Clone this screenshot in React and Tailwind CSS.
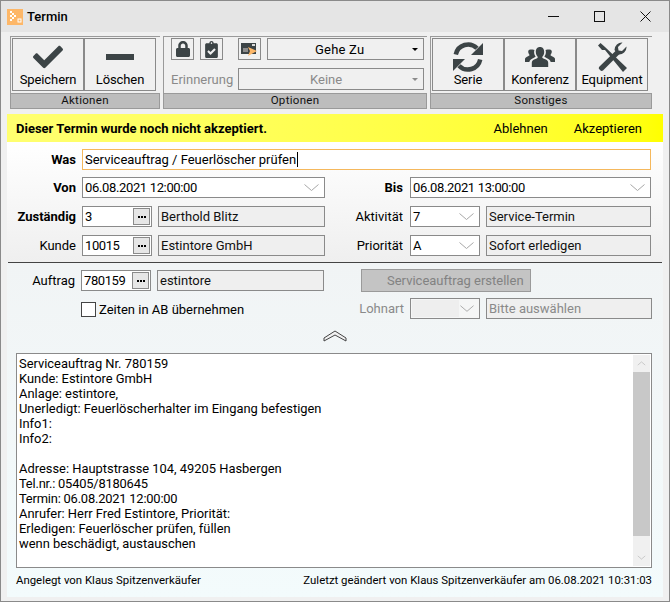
import { FaCheck, FaLock, FaClipboardCheck } from "react-icons/fa";

const BODY_LINES = [
  "Serviceauftrag Nr. 780159",
  "Kunde: Estintore GmbH",
  "Anlage: estintore,",
  "Unerledigt: Feuerlöscherhalter im Eingang befestigen",
  "Info1:",
  "Info2:",
  "",
  "Adresse: Hauptstrasse 104, 49205 Hasbergen",
  "Tel.nr.: 05405/8180645",
  "Termin: 06.08.2021 12:00:00",
  "Anrufer: Herr Fred Estintore, Priorität:",
  "Erledigen: Feuerlöscher prüfen, füllen",
  "wenn beschädigt, austauschen",
];

function Chevron({ className = "" }) {
  return (
    <svg width="17" height="9" viewBox="0 0 17 9" className={className}>
      <path d="M1.5 1.5 L8.5 7.5 L15.5 1.5" fill="none" stroke="#a8a8a8" strokeWidth="1" />
    </svg>
  );
}

function ToolButton({ icon, label }) {
  return (
    <div className="flex h-[53px] w-[72px] flex-col items-center border border-[#8a8a8a] bg-[#f0f0f0]">
      <div className="flex h-[32px] items-center justify-center pt-[3px]">{icon}</div>
      <div className="mt-[1px] text-[13px] leading-[15px] tracking-[-0.1px] text-black">{label}</div>
    </div>
  );
}

function Caption({ children }) {
  return (
    <div className="flex h-[16px] items-center justify-center border border-[#9a9a9a] bg-[#bdbdbd] text-[11.5px] leading-none tracking-[0.3px] text-[#111]">
      {children}
    </div>
  );
}

function SmallButton({ children, className = "" }) {
  return (
    <div className={`flex h-[22px] w-[23px] items-center justify-center border border-[#8a8a8a] ${className}`}>{children}</div>
  );
}

function Box({ children, className = "" }) {
  return (
    <div className={`flex h-[21px] items-center border border-[#8a8a8a] bg-white pl-[2px] text-[13px] leading-none text-black ${className}`}>
      {children}
    </div>
  );
}

function ReadOnly({ children, className = "" }) {
  return (
    <div className={`flex h-[21px] items-center border border-[#8a8a8a] bg-[#efefef] pl-[2px] text-[13px] leading-none text-[#111] ${className}`}>
      {children}
    </div>
  );
}

function DropBox({ children, className = "" }) {
  return (
    <Box className={`justify-between pr-[4px] ${className}`}>
      <span className="tracking-[-0.35px]">{children}</span>
      <Chevron />
    </Box>
  );
}

function LookupBox({ children, className = "" }) {
  return (
    <Box className={`justify-between pr-[1px] ${className}`}>
      <span className="tracking-[-0.4px]">{children}</span>
      <div className="flex h-[17px] w-[17px] items-center justify-center gap-[1px] border border-[#8a8a8a] bg-[#e6e6e6]">
        <i className="h-[2px] w-[2px] bg-black" />
        <i className="h-[2px] w-[2px] bg-black" />
        <i className="h-[2px] w-[2px] bg-black" />
      </div>
    </Box>
  );
}

function Label({ children, className = "" }) {
  return <div className={`text-right text-[13px] leading-none text-black ${className}`}>{children}</div>;
}

function FormRow({ left, leftLabel, right, rightLabel, leftBold, rightBold, className = "" }) {
  return (
    <div className={`flex items-center ${className}`}>
      <Label className={`w-[69px] ${leftBold ? "font-bold" : ""}`}>{leftLabel}</Label>
      <div className="ml-[6px] flex w-[243px] gap-[6px]">{left}</div>
      <Label className={`w-[78px] ${rightBold ? "font-bold" : ""}`}>{rightLabel}</Label>
      <div className="ml-[7px] flex w-[241px] gap-[6px]">{right}</div>
    </div>
  );
}

export default function App() {
  return (
    <div className="flex h-[602px] w-[670px] flex-col border border-[#8a8a8a] bg-[#f0f0f0] font-['Roboto',sans-serif]">
      {/* title bar */}
      <div className="flex h-[31px] shrink-0 items-center bg-[#e5e5e5] pl-[6px] pr-[18px]">
        <svg width="16" height="16" viewBox="0 0 16 16">
          <rect width="16" height="16" fill="#fdb768" />
          <path d="M3 2h2v2H3zM5 4h2v2H5zM7 6h2v2H7zM5 8h2v2H5zM3 10h2v2H3zM3 6h2v2H3z" fill="#fff" />
          <rect x="11" y="10" width="3" height="3" fill="none" stroke="#fff" />
        </svg>
        <span className="ml-[4px] text-[13px] font-medium text-black">Termin</span>
        <div className="ml-auto flex items-center gap-[35px]">
          <svg width="11" height="11" viewBox="0 0 11 11"><path d="M0 5.5h11" stroke="#111" /></svg>
          <svg width="11" height="11" viewBox="0 0 11 11"><rect x="0.5" y="0.5" width="10" height="10" fill="none" stroke="#111" /></svg>
          <svg width="11" height="11" viewBox="0 0 11 11"><path d="M0.5 0.5l10 10M10.5 0.5l-10 10" stroke="#111" /></svg>
        </div>
      </div>

      <div className="mx-[6px] flex min-h-0 flex-1 flex-col">
        {/* toolbar */}
        <div className="ml-[3px] mt-[4px] flex gap-[3px]">
          <div className="w-[150px]">
            <div className="h-[57px] border-l border-t border-[#9a9a9a] pl-[1px] pt-[1px]">
              <div className="flex">
                <ToolButton icon={<FaCheck size={30} color="#3c4446" />} label="Speichern" />
                <ToolButton icon={<div className="h-[6px] w-[28px] bg-[#3c4446]" />} label="Löschen" />
              </div>
            </div>
            <Caption>Aktionen</Caption>
          </div>

          <div className="w-[264px]">
            <div className="h-[57px] border-l border-t border-[#9a9a9a] pl-[7px] pr-[3px] pt-[1px]">
              <div className="flex">
                <SmallButton><FaLock size={16} color="#3c4446" /></SmallButton>
                <SmallButton className="ml-[6px]"><FaClipboardCheck size={17} color="#3c4446" /></SmallButton>
                <SmallButton className="ml-[15px]">
                  <svg width="17" height="15" viewBox="0 0 17 15">
                    <rect x="0" y="1" width="15" height="11" fill="#3c4446" />
                    <rect x="11" y="2" width="3" height="2" fill="#dcdcdc" />
                    <rect x="2" y="6" width="5" height="4" fill="#8c8c8c" />
                    <path d="M7 5 L16 9 L7 14 L9 9 Z" fill="#fdb768" />
                  </svg>
                </SmallButton>
                <div className="ml-[6px] flex h-[22px] w-[157px] items-center border border-[#8a8a8a] pl-[47px] pr-[5px] text-[13px] leading-none tracking-[0.2px] text-black">
                  <span>Gehe Zu</span>
                  <i className="ml-auto h-0 w-0 border-x-[3px] border-t-[3px] border-x-transparent border-t-black" />
                </div>
              </div>
              <div className="mt-[8px] flex items-center">
                <span className="w-[67px] text-[13px] leading-none text-[#8a8a8a]">Erinnerung</span>
                <div className="flex h-[22px] w-[186px] items-center border border-[#8a8a8a] pl-[71px] pr-[5px] text-[13px] leading-none text-[#8a8a8a]">
                  <span>Keine</span>
                  <i className="ml-auto h-0 w-0 border-x-[3px] border-t-[3px] border-x-transparent border-t-[#8a8a8a]" />
                </div>
              </div>
            </div>
            <Caption>Optionen</Caption>
          </div>

          <div className="w-[222px]">
            <div className="h-[57px] border-l border-t border-[#9a9a9a] pl-[1px] pt-[1px]">
              <div className="flex">
                <ToolButton
                  icon={
                    <svg width="30" height="30" viewBox="0 0 30 30">
                      <path d="M2.800 12.500 A12.500 12.500 0 0 1 24 6.300" fill="none" stroke="#3c4446" strokeWidth="4.500" />
                      <path d="M27.200 17.500 A12.500 12.500 0 0 1 6 23.700" fill="none" stroke="#3c4446" strokeWidth="4.500" />
                      <path d="M30 1 V13 H18 Z" fill="#3c4446" />
                      <path d="M0 29 V17 H12 Z" fill="#3c4446" />
                    </svg>
                  }
                  label="Serie"
                />
                <ToolButton
                  icon={
                    <svg width="30" height="22" viewBox="0 0 30 22" fill="#3c4446">
                      <path d="M15 1c3 0 4.200 2.200 4.200 5 0 2.200-1 4-2 5 0 1 1 1.500 3 2.300 1.600.7 3 1.500 3 3.400V21H6.800v-4.300c0-1.900 1.400-2.700 3-3.400 2-.8 3-1.300 3-2.300-1-1-2-2.800-2-5 0-2.800 1.200-5 4.200-5z" />
                      <path d="M7.500 3.500c.8 0 1.500.2 2 .6-.3.7-.4 1.400-.4 2 0 1.700.6 3.300 1.500 4.500-.4.600-1.200 1.100-2.600 1.700-1.900.8-3.300 1.800-3.700 3.700H0v-2.800c0-1.300 1-1.900 2-2.400 1.600-.7 2.500-1 2.500-2-.7-.8-1.300-2-1.300-3.300 0-1.900 1.400-2 4.300-2z" />
                      <path d="M22.500 3.500c-.8 0-1.500.2-2 .6.300.7.400 1.400.4 2 0 1.700-.6 3.300-1.500 4.500.4.600 1.200 1.100 2.600 1.700 1.900.8 3.300 1.800 3.700 3.700H30v-2.800c0-1.300-1-1.900-2-2.400-1.600-.7-2.500-1-2.500-2 .7-.8 1.300-2 1.300-3.300 0-1.900-1.400-2-4.300-2z" />
                    </svg>
                  }
                  label="Konferenz"
                />
                <ToolButton
                  icon={
                    <svg width="30" height="30" viewBox="0 0 30 30" fill="#3c4446">
                      <path d="M3.500 1 L1 3.500 L5 8 L8 8 L26 30 L30 26 L8 5 L8 5 Z" />
                      <path d="M2 25 L19 8.500 L22.500 12 L6 28.500 Q4.500 29.500 3 28 Q1 26.500 2 25 Z" />
                      <path d="M17.500 8 A7.500 7.500 0 0 1 25.500 0.500 L21 5 L21.500 8.500 L25 9 L29.500 4.500 A7.500 7.500 0 0 1 21 12.500 Z" />
                    </svg>
                  }
                  label="Equipment"
                />
              </div>
            </div>
            <Caption>Sonstiges</Caption>
          </div>
        </div>

        {/* acceptance banner */}
        <div className="mt-[5px] flex h-[28px] shrink-0 items-center bg-gradient-to-r from-[#ffff70] to-[#ffff00] pl-[9px] pr-[21px] text-[13px] leading-none text-black">
          <span className="font-bold">Dieser Termin wurde noch nicht akzeptiert.</span>
          <span className="ml-auto">Ablehnen</span>
          <span className="ml-[26px]">Akzeptieren</span>
        </div>

        {/* main fields */}
        <div className="h-[120px] shrink-0 bg-gradient-to-b from-white to-[#efefef] pt-[7px]">
          <div className="flex items-center">
            <Label className="w-[69px] font-bold">Was</Label>
            <div className="ml-[6px] flex h-[21px] w-[569px] items-center border border-[#f5b85c] bg-white pl-[2px] text-[13px] leading-none text-black">
              Serviceauftrag / Feuerlöscher prüfen
              <i className="ml-[1px] h-[15px] w-[1px] bg-black" />
            </div>
          </div>
          <FormRow
            className="mt-[7px]"
            leftLabel="Von"
            leftBold
            rightLabel="Bis"
            rightBold
            left={<DropBox className="w-full">06.08.2021 12:00:00</DropBox>}
            right={<DropBox className="w-full">06.08.2021 13:00:00</DropBox>}
          />
          <FormRow
            className="mt-[8px]"
            leftLabel="Zuständig"
            leftBold
            rightLabel="Aktivität"
            left={
              <>
                <LookupBox className="w-[70px]">3</LookupBox>
                <ReadOnly className="w-[167px]">Berthold Blitz</ReadOnly>
              </>
            }
            right={
              <>
                <DropBox className="w-[70px]">7</DropBox>
                <ReadOnly className="w-[165px]">Service-Termin</ReadOnly>
              </>
            }
          />
          <FormRow
            className="mt-[8px]"
            leftLabel="Kunde"
            rightLabel="Priorität"
            left={
              <>
                <LookupBox className="w-[70px]">10015</LookupBox>
                <ReadOnly className="w-[167px]">Estintore GmbH</ReadOnly>
              </>
            }
            right={
              <>
                <DropBox className="w-[70px]">A</DropBox>
                <ReadOnly className="w-[165px]">Sofort erledigen</ReadOnly>
              </>
            }
          />
        </div>

        {/* lower part */}
        <div className="flex min-h-0 flex-1 flex-col bg-gradient-to-b from-[#f1f4f5] to-[#f3fbfc]">
          <div className="ml-[1px] mr-[1px] h-[1px] shrink-0 bg-[#444]" />

          <div className="mt-[6px] flex items-center">
            <Label className="w-[68px]">Auftrag</Label>
            <LookupBox className="ml-[6px] w-[70px]">780159</LookupBox>
            <ReadOnly className="ml-[6px] w-[167px]">estintore</ReadOnly>
            <div className="ml-[37px] flex h-[23px] w-[170px] items-center border border-[#9a9a9a] bg-[#c4c4c4] pl-[25px] text-[13px] leading-none text-[#828282]">
              Serviceauftrag erstellen
            </div>
          </div>

          <div className="mt-[6px] flex items-center">
            <div className="ml-[74px] mt-[2px] h-[15px] w-[15px] border border-[#444] bg-white" />
            <span className="ml-[3px] mt-[2px] w-[255px] text-[13px] leading-none text-black">Zeiten in AB übernehmen</span>
            <span className="w-[50px] text-right text-[13px] leading-none text-[#8a8a8a]">Lohnart</span>
            <div className="ml-[6px] flex h-[21px] w-[70px] items-center justify-between border border-[#8a8a8a] bg-[#f5f6f6] pr-[4px]">
              <i className="ml-[1px] h-[17px] w-[50px] bg-[#eeeeee]" />
              <Chevron />
            </div>
            <ReadOnly className="ml-[6px] w-[166px] !text-[#8a8a8a]">Bitte auswählen</ReadOnly>
          </div>

          <div className="mt-[10px] flex justify-center">
            <svg width="24" height="14" viewBox="0 0 24 14" className="ml-[-1px]">
              <path d="M1 9 L12 2 L23 9 L23 12 L12 6 L1 12 Z" fill="#f0f0f0" stroke="#444" strokeLinejoin="round" />
            </svg>
          </div>

          <div className="ml-[9px] mr-[11px] mt-[10px] flex h-[215px] shrink-0 border border-[#8a8a8a] bg-white">
            <div className="flex-1 pl-[2px] pt-[2px] text-[12.9px] leading-[15px] text-black">
              {BODY_LINES.map((line, i) => (
                <div key={i} className={`h-[15px] ${/[./]\d{4}/.test(line) ? "tracking-[-0.2px]" : ""}`}>{line}</div>
              ))}
            </div>
            <div className="mr-[1px] mt-[1px] mb-[1px] flex w-[17px] flex-col bg-[#f0f0f0]">
              <div className="flex h-[17px] items-center justify-center">
                <Chevron className="h-[5px] w-[9px] rotate-180" />
              </div>
              <div className="h-[164px] bg-[#c8c8c8]" />
              <div className="mt-auto flex h-[17px] items-center justify-center">
                <Chevron className="h-[5px] w-[9px]" />
              </div>
            </div>
          </div>

          <div className="ml-[9px] mr-[11px] mt-[5px] flex justify-between text-[11.4px] leading-[14px] text-black">
            <span>Angelegt von Klaus Spitzenverkäufer</span>
            <span>Zuletzt geändert von Klaus Spitzenverkäufer am 06.08.2021 10:31:03</span>
          </div>
        </div>
      </div>
      <div className="h-[4px] shrink-0" />
    </div>
  );
}
